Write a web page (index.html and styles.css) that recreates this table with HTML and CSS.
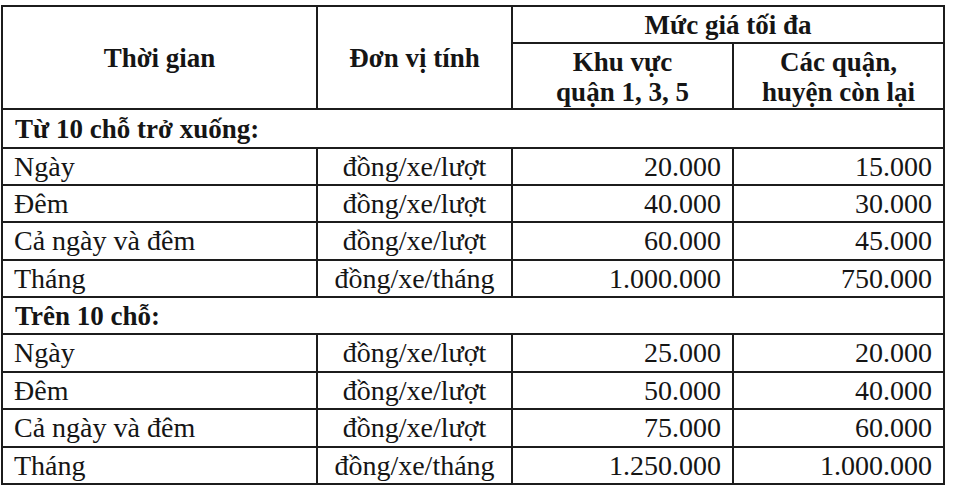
FILE: index.html
```html
<!DOCTYPE html>
<html lang="vi">
<head>
<meta charset="utf-8">
<title>Mức giá tối đa</title>
<link rel="stylesheet" href="styles.css">
</head>
<body>
<table class="price-table">
  <colgroup>
    <col class="c1"><col class="c2"><col class="c3"><col class="c4">
  </colgroup>
  <thead>
    <tr class="h1">
      <th rowspan="2">Thời gian</th>
      <th rowspan="2">Đơn vị tính</th>
      <th colspan="2">Mức giá tối đa</th>
    </tr>
    <tr class="h2">
      <th>Khu vực<br>quận 1, 3, 5</th>
      <th>Các quận,<br>huyện còn lại</th>
    </tr>
  </thead>
  <tbody>
    <tr class="sec r39"><td colspan="4">Từ 10 chỗ trở xuống:</td></tr>
    <tr class="r37"><td>Ngày</td><td class="unit">đồng/xe/lượt</td><td class="num">20.000</td><td class="num">15.000</td></tr>
    <tr class="r37"><td>Đêm</td><td class="unit">đồng/xe/lượt</td><td class="num">40.000</td><td class="num">30.000</td></tr>
    <tr class="r38"><td>Cả ngày và đêm</td><td class="unit">đồng/xe/lượt</td><td class="num">60.000</td><td class="num">45.000</td></tr>
    <tr class="r37"><td>Tháng</td><td class="unit">đồng/xe/tháng</td><td class="num">1.000.000</td><td class="num">750.000</td></tr>
    <tr class="sec r37"><td colspan="4">Trên 10 chỗ:</td></tr>
    <tr class="r38"><td>Ngày</td><td class="unit">đồng/xe/lượt</td><td class="num">25.000</td><td class="num">20.000</td></tr>
    <tr class="r37"><td>Đêm</td><td class="unit">đồng/xe/lượt</td><td class="num">50.000</td><td class="num">40.000</td></tr>
    <tr class="r38"><td>Cả ngày và đêm</td><td class="unit">đồng/xe/lượt</td><td class="num">75.000</td><td class="num">60.000</td></tr>
    <tr class="r37"><td>Tháng</td><td class="unit">đồng/xe/tháng</td><td class="num">1.250.000</td><td class="num">1.000.000</td></tr>
  </tbody>
</table>
</body>
</html>
```
FILE: styles.css
```css
html, body {
  margin: 0;
  padding: 0;
  background: #ffffff;
}
body {
  padding: 5px 0 0 0;
  font-family: "Liberation Serif", "Times New Roman", serif;
  color: #151515;
}
.price-table {
  border-collapse: collapse;
  table-layout: fixed;
  width: 942px;
  margin-left: 1px;
  font-size: 28px;
  line-height: 30px;
}
.c1 { width: 315px; }
.c2 { width: 195px; }
.c3 { width: 221px; }
.c4 { width: 211px; }
.price-table th,
.price-table td {
  border: 2px solid #1c1c1c;
  padding: 0 10px 0 11px;
  vertical-align: middle;
}
.price-table th {
  font-weight: bold;
  text-align: center;
  font-size: 27px;
  padding: 0;
}
.h1 { height: 37px; }
.h2 { height: 66px; }
.h2 th { padding-top: 2px; }
.r37 { height: 37px; }
.r38 { height: 38px; }
.r39 { height: 39px; }
.sec td {
  font-weight: bold;
  font-size: 27px;
  padding-left: 12px;
}
.price-table td.unit {
  text-align: center;
  padding: 0;
}
.price-table td.num {
  text-align: right;
  padding-right: 11px;
}
```
